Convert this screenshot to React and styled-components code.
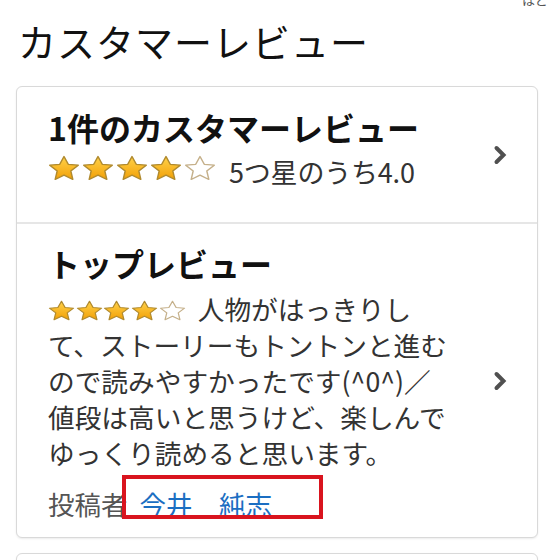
import React from "react";
import styled, { createGlobalStyle } from "styled-components";

const Global = createGlobalStyle`
  html, body { margin: 0; padding: 0; background: #fff; }
  body { font-family: "Noto Sans CJK JP", "Noto Sans", sans-serif; color: #111; }
`;

const Page = styled.div`
  width: 550px;
  overflow: hidden;
`;

const TopHint = styled.div`
  height: 6px;
  overflow: hidden;
  display: flex;
  justify-content: flex-end;
  align-items: flex-end;
  padding-right: 2px;
  font-size: 13px;
  line-height: 13px;
  color: #555;
`;

const Heading = styled.h1`
  margin: 12px 0 22px 18px;
  font-size: 38px;
  line-height: 46px;
  font-weight: 400;
  color: #111;
  letter-spacing: 1px;
`;

const Card = styled.div`
  margin: 0 12px 15px 16px;
  border: 1px solid #d9d9d9;
  border-radius: 6px;
  box-shadow: 0 1px 2px rgba(0, 0, 0, 0.08);
  background: #fff;
  min-height: ${(p) => p.$minH || 0}px;
`;

const Section = styled.div`
  display: flex;
  align-items: center;
  padding: 0 30px 0 31px;
  border-top: ${(p) => (p.$divider ? "2px solid #e6e6e6" : "none")};
`;

const Main = styled.div`
  flex: 1;
  min-width: 0;
  padding: ${(p) => p.$pt}px 0 ${(p) => p.$pb}px;
`;

const Title = styled.div`
  font-size: ${(p) => p.$size}px;
  line-height: 40px;
  font-weight: 700;
  color: #111;
  letter-spacing: ${(p) => p.$ls || 0}px;
`;

const RatingRow = styled.div`
  display: flex;
  align-items: center;
  height: 36px;
  margin-top: 3px;
`;

const Stars = styled.span`
  display: inline-flex;
  align-items: center;
  gap: ${(p) => p.$gap}px;
  vertical-align: ${(p) => p.$va || "middle"};
  margin-right: ${(p) => p.$mr}px;
`;

const RatingText = styled.span`
  font-size: 27px;
  color: #333;
  margin-top: 6px;
  letter-spacing: -0.2px;
`;

const Body = styled.div`
  margin-top: 8px;
  font-size: 26.7px;
  line-height: 36px;
  color: #333;
`;

const Author = styled.div`
  position: relative;
  margin-top: 15px;
  font-size: 26.5px;
  line-height: 36px;
  color: #555;
`;

const Name = styled.span`
  color: #1b6ec2;
  margin-left: 12px;
`;

const Highlight = styled.span`
  position: absolute;
  left: 74px;
  top: -11px;
  width: 201px;
  height: 44px;
  box-sizing: border-box;
  border: 4px solid #d9141e;
  pointer-events: none;
`;

const Chevron = styled.svg`
  flex: none;
  width: 14px;
  height: 22px;
`;

const STAR = "12,1.3 15.2,8.2 22.7,9 17.1,14.1 18.6,21.6 12,17.8 5.4,21.6 6.9,14.1 1.3,9 8.8,8.2";

function Star({ filled, w, h, id }) {
  return (
    <svg width={w} height={h} viewBox="0 0 24 23" preserveAspectRatio="none">
      <defs>
        <linearGradient id={id} x1="0" y1="0" x2="0" y2="1">
          <stop offset="0" stopColor="#ffd24a" />
          <stop offset="1" stopColor="#f2a006" />
        </linearGradient>
      </defs>
      <polygon
        points={STAR}
        fill={filled ? `url(#${id})` : "#fff"}
        stroke={filled ? "#b08a2e" : "#c5b08a"}
        strokeWidth="1.1"
        strokeLinejoin="round"
      />
    </svg>
  );
}

function StarRow({ n, w, h, gap, mr, prefix, va }) {
  return (
    <Stars $gap={gap} $mr={mr} $va={va}>
      {[0, 1, 2, 3, 4].map((i) => (
        <Star key={i} filled={i < n} w={w} h={h} id={`${prefix}${i}`} />
      ))}
    </Stars>
  );
}

function Arrow() {
  return (
    <Chevron viewBox="0 0 14 22">
      <path d="M3.5 4 L10.5 11 L3.5 18" fill="none" stroke="#505050" strokeWidth="4" strokeLinecap="round" strokeLinejoin="miter" />
    </Chevron>
  );
}

export default function App() {
  return (
    <Page>
      <Global />
      <TopHint>ほど</TopHint>
      <Heading>カスタマーレビュー</Heading>
      <Card>
        <Section>
          <Main $pt={20} $pb={36}>
            <Title $size={32} $ls={0}>1件のカスタマーレビュー</Title>
            <RatingRow>
              <StarRow n={4} w={32} h={26} gap={2} mr={13} prefix="a" />
              <RatingText>5つ星のうち4.0</RatingText>
            </RatingRow>
          </Main>
          <Arrow />
        </Section>
        <Section $divider>
          <Main $pt={19} $pb={15}>
            <Title $size={32}>トップレビュー</Title>
            <Body>
              <StarRow n={4} w={27} h={21} gap={0.7} mr={12} prefix="b" va="-1px" />
              人物がはっきりし
              <br />
              て、ストーリーもトントンと進む
              <br />
              ので読みやすかったです(^0^)／
              <br />
              値段は高いと思うけど、楽しんで
              <br />
              ゆっくり読めると思います。
            </Body>
            <Author>
              投稿者<Name>今井　純志</Name>
              <Highlight />
            </Author>
          </Main>
          <Arrow />
        </Section>
      </Card>
      <Card $minH={60} />
    </Page>
  );
}
